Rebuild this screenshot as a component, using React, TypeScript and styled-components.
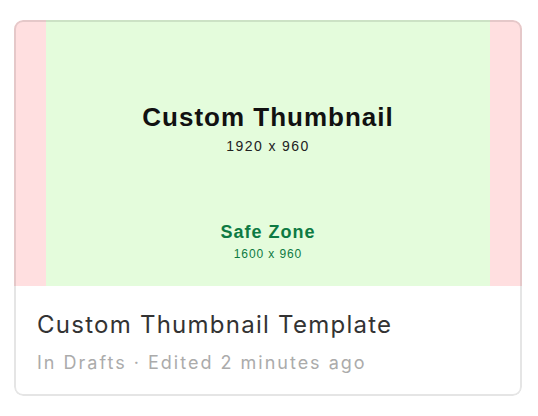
import React from "react";
import styled, { createGlobalStyle } from "styled-components";

const GlobalStyle = createGlobalStyle`
  html, body { margin: 0; padding: 0; background: #ffffff; }
  body { font-family: Inter, "Noto Sans", sans-serif; }
  * { box-sizing: border-box; }
`;

const Page = styled.div`
  padding: 20px 16px 20px 14px;
`;

const Card = styled.div`
  position: relative;
  width: 508px;
  height: 376px;
  border-radius: 9px;
  overflow: hidden;
  background: #ffffff;
  display: flex;
  flex-direction: column;

  &::after {
    content: "";
    position: absolute;
    inset: 0;
    border: 2px solid rgba(0, 0, 0, 0.1);
    border-radius: 9px;
    pointer-events: none;
  }
`;

const Preview = styled.div`
  height: 266px;
  display: grid;
  grid-template-columns: 32px 1fr 32px;
  flex-shrink: 0;
`;

const Bleed = styled.div`
  background: #ffdfe0;
`;

const SafeArea = styled.div`
  background: #e4fcdc;
  display: flex;
  flex-direction: column;
  align-items: center;
  padding-top: 82px;
  font-family: "Liberation Sans", Arial, sans-serif;
`;

const PreviewTitle = styled.div`
  font-size: 26px;
  line-height: 30px;
  font-weight: 700;
  letter-spacing: 1px;
  color: #111111;
`;

const PreviewSize = styled.div<{ $small?: boolean; $green?: boolean }>`
  margin-top: ${(p) => (p.$small ? "4px" : "5px")};
  font-size: ${(p) => (p.$small ? "12px" : "14px")};
  line-height: ${(p) => (p.$small ? "15px" : "18px")};
  letter-spacing: ${(p) => (p.$small ? "0.9px" : "1.4px")};
  color: ${(p) => (p.$green ? "#0d7a43" : "#222222")};
`;

const SafeLabel = styled.div`
  margin-top: 66px;
  font-size: 18px;
  line-height: 22px;
  font-weight: 700;
  letter-spacing: 1px;
  color: #0d7a43;
`;

const Info = styled.div`
  padding: 24px 22px 0 23px;
  display: flex;
  flex-direction: column;
  gap: 11px;
`;

const Title = styled.div`
  font-size: 24px;
  line-height: 30px;
  letter-spacing: 1.25px;
  color: #333333;
`;

const Meta = styled.div`
  font-size: 18px;
  line-height: 24px;
  letter-spacing: 2px;
  color: #ababab;
`;

export default function App() {
  return (
    <>
      <GlobalStyle />
      <Page>
        <Card>
          <Preview>
            <Bleed />
            <SafeArea>
              <PreviewTitle>Custom Thumbnail</PreviewTitle>
              <PreviewSize>1920 x 960</PreviewSize>
              <SafeLabel>Safe Zone</SafeLabel>
              <PreviewSize $small $green>1600 x 960</PreviewSize>
            </SafeArea>
            <Bleed />
          </Preview>
          <Info>
            <Title>Custom Thumbnail Template</Title>
            <Meta>In Drafts · Edited 2 minutes ago</Meta>
          </Info>
        </Card>
      </Page>
    </>
  );
}
